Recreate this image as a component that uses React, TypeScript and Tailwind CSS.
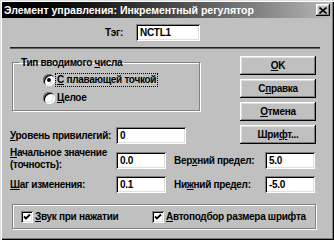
import React from 'react'

const bevel =
  'shadow-[inset_-1px_-1px_#000,inset_1px_1px_#fff,inset_-2px_-2px_#808080,inset_2px_2px_#dfdfdf]'
const sunken =
  'shadow-[inset_1px_1px_#808080,inset_-1px_-1px_#fff,inset_2px_2px_#000,inset_-2px_-2px_#dfdfdf]'
const etched = 'border border-[#808080] shadow-[inset_1px_1px_#fff,1px_1px_#fff]'

function Field({ value, w }: { value: string; w: string }) {
  return (
    <div className={`${w} h-[17px] shrink-0 bg-white ${sunken} flex items-center pl-[4px] text-black`}>
      {value}
    </div>
  )
}

function Btn({ children }: { children: React.ReactNode }) {
  return (
    <div className={`w-[76px] h-[19px] bg-[#c0c0c0] ${bevel} flex items-center justify-center`}>
      {children}
    </div>
  )
}

function Radio({ checked }: { checked?: boolean }) {
  return (
    <div className={`w-[12px] h-[12px] rounded-full bg-white ${sunken} flex items-center justify-center shrink-0`}>
      {checked && <div className="w-[4px] h-[4px] rounded-full bg-black" />}
    </div>
  )
}

function Check() {
  return (
    <div className={`w-[12px] h-[12px] bg-white ${sunken} flex items-center justify-center shrink-0`}>
      <svg width="8" height="8" viewBox="0 0 8 8">
        <path d="M1 3.5 L3 5.5 L7 1.5" stroke="#000" strokeWidth="1.8" fill="none" />
      </svg>
    </div>
  )
}

export default function App() {
  return (
    <div className="w-[334px] h-[240px] bg-[#c0c0c0] font-['Liberation_Sans',Arial,sans-serif] text-[10px] font-bold text-black leading-[12px] tracking-[-0.3px] whitespace-nowrap shadow-[inset_1px_1px_#dfdfdf,inset_2px_2px_#fff,inset_-1px_-1px_#000,inset_-2px_-2px_#808080] p-[2px] overflow-hidden">
      {/* Title bar */}
      <div className="h-[16px] bg-linear-to-r from-[#000000] to-[#b8b8b8] flex items-center justify-between pl-[2px] pr-[2px]">
        <span className="text-white text-[10.5px] tracking-normal">Элемент управления: Инкрементный регулятор</span>
        <div className={`w-[14px] h-[12px] bg-[#c0c0c0] ${bevel} flex items-center justify-center`}>
          <svg width="8" height="7" viewBox="0 0 8 7">
            <path d="M0.5 0.5 L7.5 6.5 M7.5 0.5 L0.5 6.5" stroke="#000" strokeWidth="1.6" />
          </svg>
        </div>
      </div>

      <div className="pl-[8px]">
        {/* Tag row */}
        <div className="flex items-center mt-[6px]">
          <div className="w-[126px] text-right pr-[13px]">Тэг:</div>
          <Field value="NCTL1" w="w-[64px]" />
        </div>

        {/* Separator */}
        <div className="w-[310px] mt-[6px]">
          <div className="h-[1px] bg-[#202020]" />
          <div className="h-[1px] bg-[#606060]" />
        </div>

        {/* Main area */}
        <div className="flex mt-[7px]">
          <div className="w-[230px]">
            <fieldset className={`ml-[2px] w-[188px] ${etched} pb-[4px]`}>
              <legend className="ml-[6px] px-[2px] leading-[13px]">
                Тип вводимого <u>ч</u>исла
              </legend>
              <div className="pl-[30px]">
                <div className="flex items-center h-[16px] mt-[3px]">
                  <Radio checked />
                  <span className="ml-[1px] px-[1px] outline-1 outline-dotted outline-black">
                    <u>С</u> плавающей точкой
                  </span>
                </div>
                <div className="flex items-center h-[16px] mt-[2px]">
                  <Radio />
                  <span className="ml-[2px]">
                    <u>Ц</u>елое
                  </span>
                </div>
              </div>
            </fieldset>
            <div className="flex items-center mt-[16px]">
              <div className="w-[106px]">
                <u>У</u>ровень привилегий:
              </div>
              <Field value="0" w="w-[70px]" />
            </div>
          </div>
          <div className="flex flex-col gap-[4px]">
            <Btn>
              <span>
                <u>O</u>K
              </span>
            </Btn>
            <Btn>
              <span>
                С<u>п</u>равка
              </span>
            </Btn>
            <Btn>
              <span>
                <u>О</u>тмена
              </span>
            </Btn>
            <Btn>
              <span>
                Шри<u>ф</u>т...
              </span>
            </Btn>
          </div>
        </div>

        {/* Value rows */}
        <div className="flex items-start mt-[3px]">
          <div className="w-[106px]">
            <u>Н</u>ачальное значение
            <br />
            (точность):
          </div>
          <div className="mt-[5px] flex items-center">
            <Field value="0.0" w="w-[50px]" />
            <div className="w-[99px] pl-[8px]">
              Вер<u>х</u>ний предел:
            </div>
            <Field value="5.0" w="w-[50px]" />
          </div>
        </div>
        <div className="flex items-center mt-[5px]">
          <div className="w-[106px]">
            <u>Ш</u>аг изменения:
          </div>
          <Field value="0.1" w="w-[50px]" />
          <div className="w-[99px] pl-[8px]">
            Ни<u>ж</u>ний предел:
          </div>
          <Field value="-5.0" w="w-[50px]" />
        </div>

        {/* Options */}
        <div className={`ml-[2px] mt-[11px] w-[304px] h-[25px] ${etched} flex items-center pl-[8px]`}>
          <Check />
          <span className="ml-[2px] w-[117px]">
            <u>З</u>вук при нажатии
          </span>
          <Check />
          <span className="ml-[2px]">
            <u>А</u>втоподбор размера шрифта
          </span>
        </div>
      </div>
    </div>
  )
}
